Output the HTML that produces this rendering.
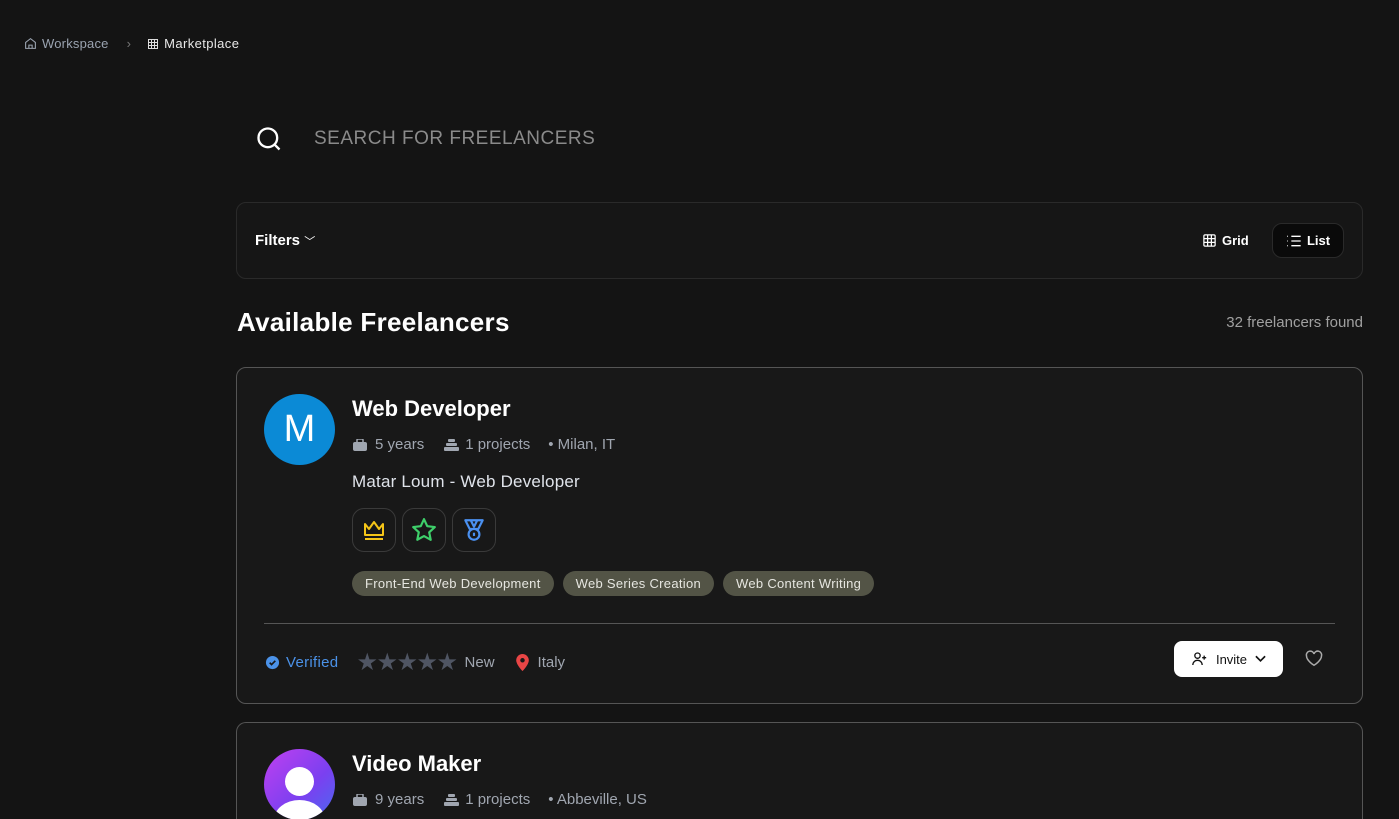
<!DOCTYPE html>
<html><head><meta charset="utf-8"><style>
*{box-sizing:border-box;margin:0;padding:0}
html,body{width:1399px;height:819px;overflow:hidden}
body{background:#141414;font-family:"Liberation Sans",sans-serif;color:#fff;position:relative}
.abs{position:absolute}
.crumb{top:36px;left:24px;font-size:13px;display:flex;align-items:center;color:#9aa3b0;letter-spacing:0.2px}
.card{position:absolute;left:236px;width:1127px;background:#181818;border:1px solid #555;border-radius:10px}
.meta{display:flex;align-items:center;color:#a0a6b0;font-size:15px}
.tag{display:inline-block;background:#535446;color:#e6e6e0;font-size:13px;padding:5px 13px;border-radius:13px;margin-right:9px;letter-spacing:0.3px}
.badge{width:44px;height:44px;border:1px solid #3a3a3a;border-radius:12px;display:inline-flex;align-items:center;justify-content:center;margin-right:6px}
</style></head><body>
<div class="abs crumb">
<svg width="13" height="13" viewBox="0 0 24 24" fill="none" stroke="#9aa3b0" stroke-width="2"><path d="M3 10l9-7 9 7v11H3z"/><path d="M9 21v-6h6v6"/></svg>
<span style="margin-left:5px">Workspace</span>
<span style="margin:0 16px 0 18px;color:#777">›</span>
<svg width="12" height="12" viewBox="0 0 24 24" fill="none" stroke="#ddd" stroke-width="2"><rect x="3" y="3" width="18" height="18"/><path d="M3 9h18M3 15h18M9 3v18M15 3v18"/></svg>
<span style="margin-left:5px;color:#e8e8e8;letter-spacing:0.4px">Marketplace</span>
</div>
<svg class="abs" style="left:255px;top:125px" width="28" height="28" viewBox="0 0 24 24" fill="none" stroke="#fff" stroke-width="2"><circle cx="11" cy="11" r="8"/><path d="M17 17l4 4"/></svg>
<div class="abs" style="left:314px;top:128px;font-size:19px;letter-spacing:0.5px;color:#8a8a8a">SEARCH FOR FREELANCERS</div>
<div class="abs" style="left:236px;top:202px;width:1127px;height:77px;border:1px solid #2a2a2a;border-radius:10px;background:#161616">
 <div class="abs" style="left:18px;top:29px;font-size:15px;font-weight:bold">Filters <span style="font-weight:normal;font-size:11px">﹀</span></div>
 <div class="abs" style="left:965px;top:30px;font-size:13px;font-weight:bold;display:flex;align-items:center"><svg width="15" height="15" viewBox="0 0 24 24" fill="none" stroke="#fff" stroke-width="2"><rect x="3" y="3" width="18" height="18" rx="2"/><path d="M3 9h18M3 15h18M9 3v18M15 3v18"/></svg><span style="margin-left:5px">Grid</span></div>
 <div class="abs" style="left:1035px;top:20px;width:72px;height:35px;border:1px solid #2a2a2a;background:#0a0a0a;border-radius:10px;font-size:13px;font-weight:bold;display:flex;align-items:center;justify-content:center"><svg width="16" height="14" viewBox="0 0 24 20" fill="none" stroke="#fff" stroke-width="2"><path d="M8 3h14M8 10h14M8 17h14M2 3h1M2 10h1M2 17h1"/></svg><span style="margin-left:5px">List</span></div>
</div>
<div class="abs" style="left:237px;top:307px;font-size:26px;font-weight:bold;letter-spacing:0.3px">Available Freelancers</div>
<div class="abs" style="right:36px;top:314px;font-size:15px;color:#a0a0a0">32 freelancers found</div>

<div class="card" style="top:367px;height:337px">
 <div class="abs" style="left:27px;top:26px;width:71px;height:71px;border-radius:50%;background:#0b8ad6;display:flex;align-items:center;justify-content:center;font-size:38px">M</div>
 <div class="abs" style="left:115px;top:28px;font-size:22px;font-weight:bold">Web Developer</div>
 <div class="abs meta" style="left:116px;top:68px">
  <svg width="14" height="12" viewBox="0 0 14 12"><rect x="0" y="3" width="14" height="9" rx="2" fill="#a0a6b0"/><rect x="4" y="0" width="6" height="4" rx="1" fill="none" stroke="#a0a6b0" stroke-width="1.5"/></svg><span style="margin-left:8px">5 years</span>
  <svg style="margin-left:20px" width="15" height="12" viewBox="0 0 15 12"><rect x="4" y="0" width="7" height="3" rx="1" fill="#a0a6b0"/><rect x="2" y="4" width="11" height="3" rx="1" fill="#a0a6b0"/><rect x="0" y="8" width="15" height="4" rx="1" fill="#a0a6b0"/></svg><span style="margin-left:6px">1 projects</span>
  <span style="margin-left:18px">• Milan, IT</span>
 </div>
 <div class="abs" style="left:115px;top:104px;font-size:17px;color:#dfe3ea;letter-spacing:0.2px">Matar Loum - Web Developer</div>
 <div class="abs" style="left:115px;top:140px;display:flex">
  <div class="badge"><svg width="26" height="24" viewBox="0 0 24 24" fill="none" stroke="#f5c518" stroke-width="2" stroke-linejoin="round"><path d="M3 6l4 5 5-7 5 7 4-5v11H3z"/><path d="M3 21h18"/></svg></div>
  <div class="badge"><svg width="26" height="26" viewBox="0 0 24 24" fill="none" stroke="#3ecf6a" stroke-width="2" stroke-linejoin="round"><path d="M12 2l3 6.5 7 .8-5.2 4.8 1.4 7L12 17.6 5.8 21l1.4-7L2 9.3l7-.8z"/></svg></div>
  <div class="badge"><svg width="26" height="26" viewBox="0 0 24 24" fill="none" stroke="#4a90f0" stroke-width="2" stroke-linejoin="round"><path d="M4 3h16l-4 8H8z"/><path d="M9 3l3 6 3-6"/><circle cx="12" cy="16" r="5"/><path d="M12 14.5v3"/></svg></div>
 </div>
 <div class="abs" style="left:115px;top:203px;display:flex">
  <span class="tag">Front-End Web Development</span><span class="tag">Web Series Creation</span><span class="tag">Web Content Writing</span>
 </div>
 <div class="abs" style="left:27px;top:255px;width:1071px;height:1px;background:#555"></div>
 <div class="abs meta" style="left:28px;top:280px">
  <svg width="15" height="15" viewBox="0 0 16 16"><circle cx="8" cy="8" r="7" fill="#4b92e8"/><path d="M5 8.2l2 2 4-4" stroke="#181818" stroke-width="1.8" fill="none"/></svg>
  <span style="margin-left:6px;color:#4b92e8;letter-spacing:0.3px">Verified</span>
  <span style="margin-left:18px;color:#4f5563;font-size:24px;letter-spacing:-1.5px">★★★★★</span>
  <span style="margin-left:8px">New</span>
  <svg style="margin-left:20px" width="15" height="18" viewBox="0 0 16 20"><path d="M8 0a7 7 0 0 1 7 7c0 5-7 12-7 12S1 12 1 7a7 7 0 0 1 7-7z" fill="#e84545"/><circle cx="8" cy="7" r="2.5" fill="#181818"/></svg>
  <span style="margin-left:8px">Italy</span>
 </div>
 <div class="abs" style="left:937px;top:273px;width:109px;height:36px;background:#fff;border-radius:8px;color:#111;font-size:13px;display:flex;align-items:center;justify-content:center">
  <svg width="17" height="16" viewBox="0 0 24 24" fill="none" stroke="#111" stroke-width="2"><circle cx="9" cy="7" r="4"/><path d="M2 21c0-4 3-7 7-7s7 3 7 7M19 7v6M16 10h6"/></svg>
  <span style="margin:0 8px 0 8px">Invite</span>
  <svg width="11" height="8" viewBox="0 0 12 8" fill="none" stroke="#111" stroke-width="1.8"><path d="M1 1l5 5 5-5"/></svg>
 </div>
 <svg class="abs" style="left:1068px;top:282px" width="18" height="17" viewBox="0 0 24 22" fill="none" stroke="#aaa" stroke-width="2"><path d="M12 20S2 14 2 7.5A5 5 0 0 1 12 5a5 5 0 0 1 10 2.5C22 14 12 20 12 20z"/></svg>
</div>

<div class="card" style="top:722px;height:97px;border-bottom:none;border-radius:10px 10px 0 0;overflow:hidden">
 <div class="abs" style="left:27px;top:26px;width:71px;height:71px;border-radius:50%;background:linear-gradient(135deg,#c040f0,#7a40f0 60%,#4a6af0);overflow:hidden">
  <div class="abs" style="left:21px;top:18px;width:29px;height:29px;border-radius:50%;background:#fff"></div>
  <div class="abs" style="left:10px;top:51px;width:51px;height:40px;border-radius:50%;background:#fff"></div>
 </div>
 <div class="abs" style="left:115px;top:28px;font-size:22px;font-weight:bold">Video Maker</div>
 <div class="abs meta" style="left:116px;top:68px">
  <svg width="14" height="12" viewBox="0 0 14 12"><rect x="0" y="3" width="14" height="9" rx="2" fill="#a0a6b0"/><rect x="4" y="0" width="6" height="4" rx="1" fill="none" stroke="#a0a6b0" stroke-width="1.5"/></svg><span style="margin-left:8px">9 years</span>
  <svg style="margin-left:20px" width="15" height="12" viewBox="0 0 15 12"><rect x="4" y="0" width="7" height="3" rx="1" fill="#a0a6b0"/><rect x="2" y="4" width="11" height="3" rx="1" fill="#a0a6b0"/><rect x="0" y="8" width="15" height="4" rx="1" fill="#a0a6b0"/></svg><span style="margin-left:6px">1 projects</span>
  <span style="margin-left:18px">• Abbeville, US</span>
 </div>
</div>
</body></html>
